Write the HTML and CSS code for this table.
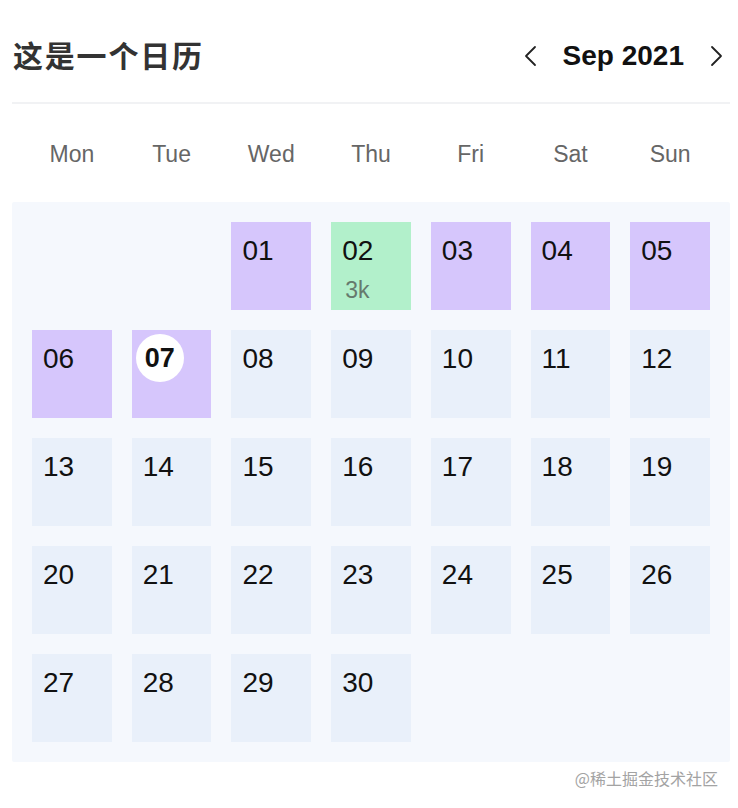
FILE: index.html
```html
<!DOCTYPE html>
<html lang="zh">
<head>
<meta charset="utf-8">
<title>日历</title>
<link rel="stylesheet" href="styles.css">
</head>
<body>
<div class="page">
  <header class="header">
    <h1 class="title">这是一个日历</h1>
    <div class="nav">
      <button class="nav-btn" aria-label="上个月">
        <svg width="14" height="22" viewBox="0 0 14 22"><polyline points="12,2 3,11 12,20" fill="none" stroke="#222" stroke-width="1.8" stroke-linecap="round" stroke-linejoin="round"/></svg>
      </button>
      <span class="month">Sep 2021</span>
      <button class="nav-btn" aria-label="下个月">
        <svg width="14" height="22" viewBox="0 0 14 22"><polyline points="2,2 11,11 2,20" fill="none" stroke="#222" stroke-width="1.8" stroke-linecap="round" stroke-linejoin="round"/></svg>
      </button>
    </div>
  </header>

  <div class="weekdays">
    <span>Mon</span><span>Tue</span><span>Wed</span><span>Thu</span><span>Fri</span><span>Sat</span><span>Sun</span>
  </div>

  <div class="board">
    <div class="grid">
      <div class="blank"></div>
      <div class="blank"></div>
      <div class="day purple"><span class="num">01</span></div>
      <div class="day green"><span class="num">02</span><span class="sub">3k</span></div>
      <div class="day purple"><span class="num">03</span></div>
      <div class="day purple"><span class="num">04</span></div>
      <div class="day purple"><span class="num">05</span></div>

      <div class="day purple"><span class="num">06</span></div>
      <div class="day purple"><span class="num today">07</span></div>
      <div class="day"><span class="num">08</span></div>
      <div class="day"><span class="num">09</span></div>
      <div class="day"><span class="num">10</span></div>
      <div class="day"><span class="num">11</span></div>
      <div class="day"><span class="num">12</span></div>

      <div class="day"><span class="num">13</span></div>
      <div class="day"><span class="num">14</span></div>
      <div class="day"><span class="num">15</span></div>
      <div class="day"><span class="num">16</span></div>
      <div class="day"><span class="num">17</span></div>
      <div class="day"><span class="num">18</span></div>
      <div class="day"><span class="num">19</span></div>

      <div class="day"><span class="num">20</span></div>
      <div class="day"><span class="num">21</span></div>
      <div class="day"><span class="num">22</span></div>
      <div class="day"><span class="num">23</span></div>
      <div class="day"><span class="num">24</span></div>
      <div class="day"><span class="num">25</span></div>
      <div class="day"><span class="num">26</span></div>

      <div class="day"><span class="num">27</span></div>
      <div class="day"><span class="num">28</span></div>
      <div class="day"><span class="num">29</span></div>
      <div class="day"><span class="num">30</span></div>
    </div>
  </div>

  <div class="watermark">@稀土掘金技术社区</div>
</div>
</body>
</html>
```

FILE: styles.css
```css
* { box-sizing: border-box; }

html, body {
  margin: 0;
  padding: 0;
  background: #ffffff;
}

body {
  font-family: "Liberation Sans", Arial, "Noto Sans CJK SC", sans-serif;
  color: #111;
}

.page {
  width: 738px;
  padding: 0 8px 0 12px;
}

.header {
  display: flex;
  align-items: center;
  justify-content: space-between;
  height: 104px;
  padding-top: 10px;
  border-bottom: 2px solid #f1f2f4;
}

.title {
  margin: 0 0 4px;
  padding-left: 1px;
  font-family: "Noto Sans CJK SC", sans-serif;
  font-size: 30px;
  font-weight: 700;
  color: #333;
  letter-spacing: 1.8px;
}

.nav {
  display: flex;
  align-items: center;
  gap: 26px;
  padding-right: 6px;
}

.nav-btn {
  display: flex;
  align-items: center;
  justify-content: center;
  border: none;
  background: none;
  padding: 0;
  width: 14px;
  height: 24px;
}

.month {
  font-size: 28px;
  font-weight: 700;
  color: #111;
}

.weekdays {
  display: grid;
  grid-template-columns: repeat(7, 1fr);
  column-gap: 20px;
  padding: 2px 20px 0;
  height: 98px;
  align-items: center;
  font-size: 23px;
  color: #666;
  text-align: center;
}

.board {
  background: #f5f8fd;
  padding: 20px;
  border-radius: 2px;
}

.grid {
  display: grid;
  grid-template-columns: repeat(7, 1fr);
  grid-auto-rows: 88px;
  gap: 20px;
}

.day {
  display: flex;
  flex-direction: column;
  align-items: flex-start;
  background: #e9f0fa;
  padding: 13px 0 0 11px;
}

.day.purple { background: #d6c6fc; }
.day.green { background: #b2f0cb; }

.num {
  font-size: 28px;
  line-height: 32px;
  color: #111;
}

.num.today {
  display: flex;
  align-items: center;
  justify-content: center;
  width: 48px;
  height: 48px;
  margin: -9px 0 0 -7px;
  border-radius: 50%;
  background: #ffffff;
  font-weight: 700;
  font-size: 27px;
}

.sub {
  margin-top: 10px;
  padding-left: 3px;
  font-size: 23px;
  line-height: 26px;
  color: #667a6d;
}

.watermark {
  text-align: right;
  padding: 4px 12px 0 0;
  font-family: "Noto Sans CJK SC", sans-serif;
  font-size: 16px;
  color: #a3a3a3;
}
```
